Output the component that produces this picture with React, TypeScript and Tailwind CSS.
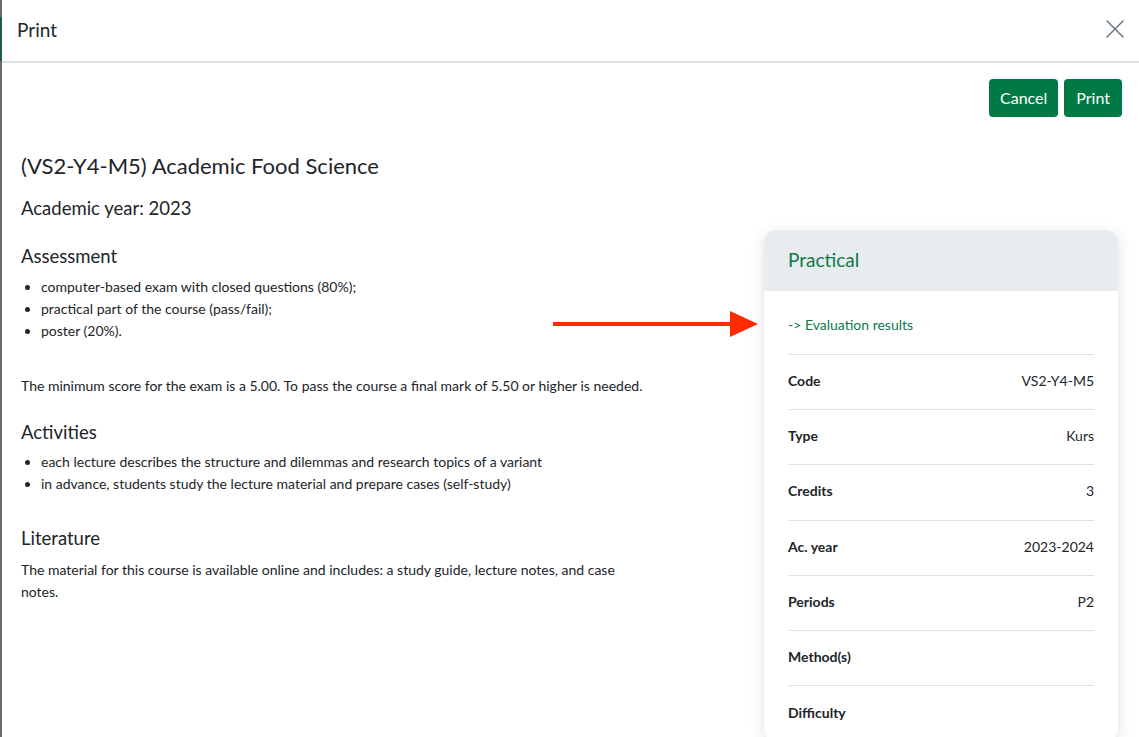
import { X } from 'lucide-react'

const rows = [
  { label: 'Code', value: 'VS2-Y4-M5' },
  { label: 'Type', value: 'Kurs' },
  { label: 'Credits', value: '3' },
  { label: 'Ac. year', value: '2023-2024' },
  { label: 'Periods', value: 'P2' },
  { label: 'Method(s)', value: '' },
  { label: 'Difficulty', value: '' },
]

export default function App() {
  return (
    <div
      className="flex h-[737px] w-full overflow-hidden bg-white text-[#212529]"
      style={{ fontFamily: 'Lato, "Noto Sans", sans-serif' }}
    >
      {/* backdrop edge */}
      <div className="flex w-[2px] shrink-0 flex-col bg-[#6c6c6c]">
        <div className="mt-[17px] h-[44px] bg-[#1f5b45]" />
      </div>

      <div className="flex min-w-0 flex-1 flex-col">
        {/* Header */}
        <div className="flex h-[63px] shrink-0 items-center justify-between border-b-2 border-[#dee2e6] pl-[15px] pr-[8px]">
          <h5 className="mt-[-3px] text-[19px] leading-none">Print</h5>
          <X size={32} strokeWidth={1.1} className="mt-[-4px] text-[#6c757d]" />
        </div>

        <div className="flex shrink-0 flex-col px-[19px] pt-[16px]">
          <div className="flex justify-end gap-[6px]">
            <button className="h-[38px] rounded-[4px] bg-[#007a45] px-[11px] text-[16px] text-white">Cancel</button>
            <button className="mr-[-2px] h-[38px] rounded-[4px] bg-[#007a45] px-[12px] text-[16px] text-white">Print</button>
          </div>

          <div className="flex items-start">
            {/* Left column */}
            <div className="w-[640px] shrink-0">
              <h2 className="mt-[34px] text-[22px] leading-[30px]">(VS2-Y4-M5) Academic Food Science</h2>
              <h4 className="mt-[15px] text-[18.5px] leading-[24px]">Academic year: 2023</h4>

              <h4 className="mt-[24px] text-[18.5px] leading-[24px]">Assessment</h4>
              <ul className="mt-[8px] list-disc pl-[20px] text-[14px] leading-[22px]">
                <li>computer-based exam with closed questions (80%);</li>
                <li>practical part of the course (pass/fail);</li>
                <li>poster (20%).</li>
              </ul>

              <p className="mt-[33px] text-[14px] leading-[22px]">
                The minimum score for the exam is a 5.00. To pass the course a final mark of 5.50 or higher is needed.
              </p>

              <h4 className="mt-[23px] text-[18.5px] leading-[24px]">Activities</h4>
              <ul className="mt-[7px] list-disc pl-[20px] text-[14px] leading-[22px]">
                <li>each lecture describes the structure and dilemmas and research topics of a variant</li>
                <li>in advance, students study the lecture material and prepare cases (self-study)</li>
              </ul>

              <h4 className="mt-[31px] text-[18.5px] leading-[24px]">Literature</h4>
              <p className="mt-[9px] w-[620px] text-[14px] leading-[22px]">
                The material for this course is available online and includes: a study guide, lecture notes, and case notes.
              </p>
            </div>

            {/* Arrow */}
            <div className="relative flex-1 self-stretch">
              <svg className="absolute left-[-108px] top-[192px]" width="206" height="30" viewBox="0 0 206 30">
                <rect x="0" y="13" width="180" height="4" fill="#ff2a00" />
                <polygon points="177,2 205,15 177,28" fill="#ff2a00" />
              </svg>
            </div>

            {/* Card */}
            <div className="mr-[2px] mt-[113px] w-[354px] shrink-0 overflow-hidden rounded-[12px] bg-white shadow-[0_4px_16px_rgba(0,0,0,0.12)]">
              <div className="flex h-[61px] items-center bg-[#e9ecef] px-[24px]">
                <span className="text-[19px] text-[#0b7a47]">Practical</span>
              </div>
              <div className="px-[24px]">
                <div className="flex h-[64px] items-center border-b border-[#dee2e6] pt-[4px]">
                  <span className="text-[14px] text-[#0b7a47]">-&gt; Evaluation results</span>
                </div>
                {rows.map((r, i) => (
                  <div
                    key={r.label}
                    className={`flex h-[55.2px] items-center justify-between pb-[3px] text-[14px] ${i < rows.length - 1 ? 'border-b border-[#dee2e6]' : ''}`}
                  >
                    <span className="font-bold">{r.label}</span>
                    <span>{r.value}</span>
                  </div>
                ))}
              </div>
            </div>
          </div>
        </div>
      </div>
    </div>
  )
}
